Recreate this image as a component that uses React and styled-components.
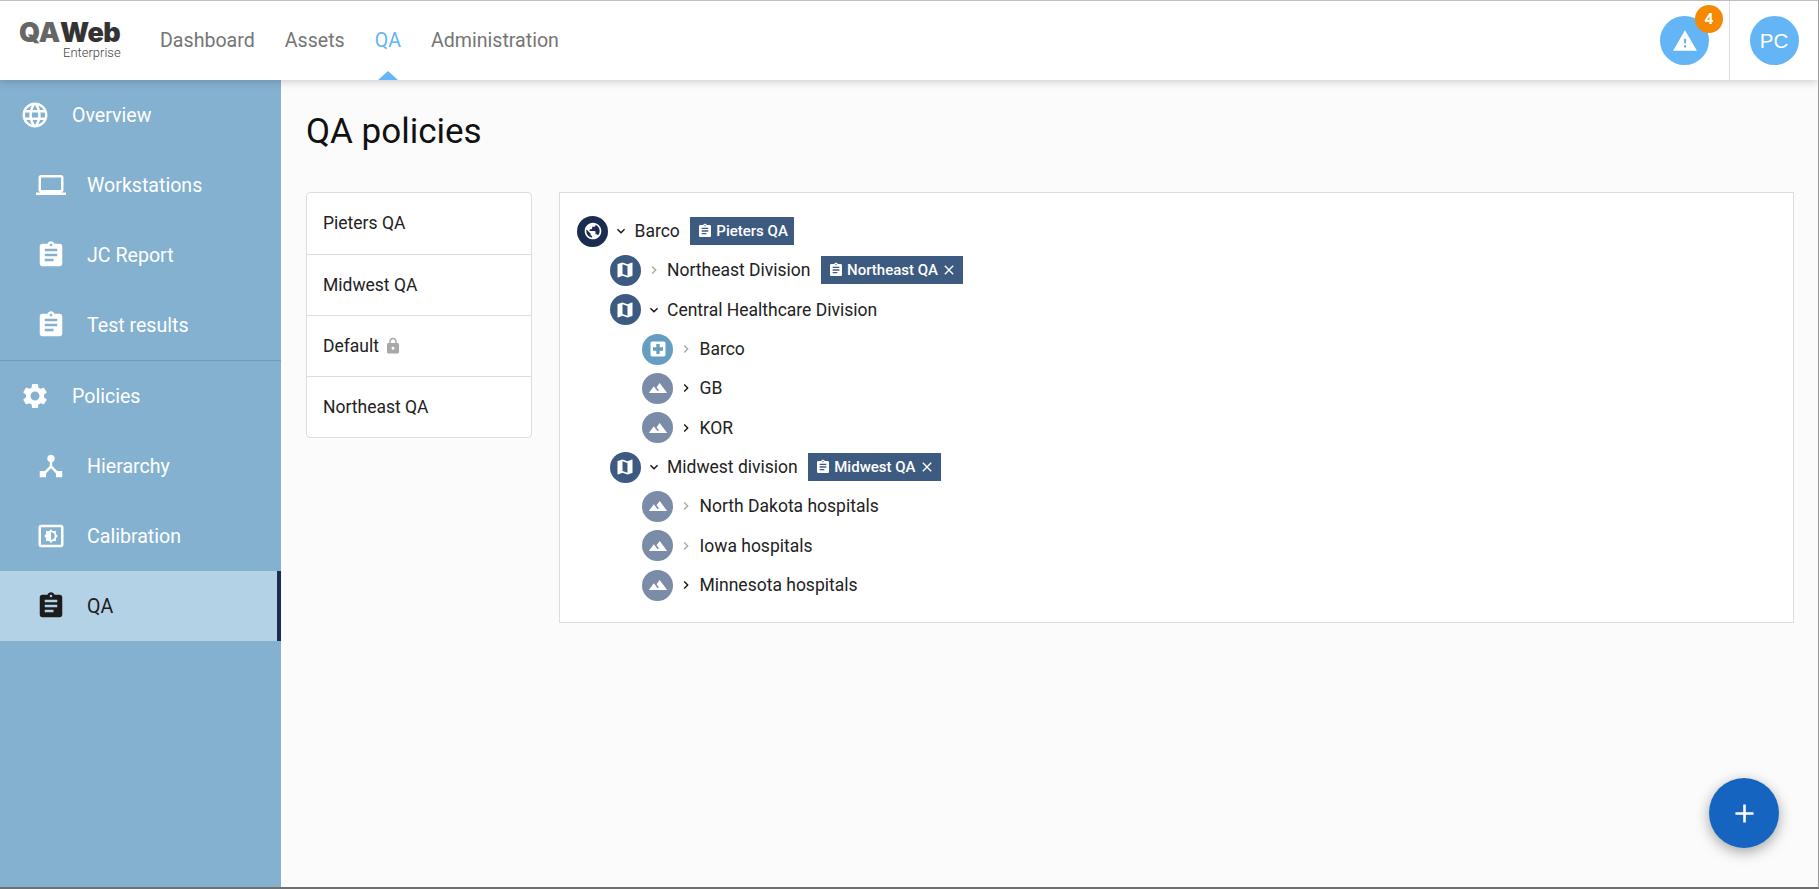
import React from 'react';
import styled, { createGlobalStyle } from 'styled-components';

const GlobalStyle = createGlobalStyle`
  html, body {
    margin: 0;
    padding: 0;
    height: 100%;
    overflow: hidden;
    background: #fbfbfb;
    font-family: 'Roboto', 'Liberation Sans', sans-serif;
  }
  * {
    box-sizing: border-box;
  }
`;

const paths = {
  public: 'M12 2C6.48 2 2 6.48 2 12s4.48 10 10 10 10-4.48 10-10S17.52 2 12 2zm-1 17.93c-3.95-.49-7-3.85-7-7.93 0-.62.08-1.21.21-1.79L9 15v1c0 1.1.9 2 2 2v1.93zm6.9-2.54c-.26-.81-1-1.39-1.9-1.39h-1v-3c0-.55-.45-1-1-1H8v-2h2c.55 0 1-.45 1-1V7h2c1.1 0 2-.9 2-2v-.41c2.93 1.19 5 4.06 5 7.41 0 2.08-.8 3.97-2.1 5.39z',
  map: 'M20.5 3l-.16.03L15 5.1 9 3 3.36 4.9c-.21.07-.36.25-.36.48V20.5c0 .28.22.5.5.5l.16-.03L9 18.9l6 2.1 5.64-1.9c.21-.07.36-.25.36-.48V3.5c0-.28-.22-.5-.5-.5zM15 19l-6-2.11V5l6 2.11V19z',
  hospital: 'M19 3H5c-1.1 0-1.99.9-1.99 2L3 19c0 1.1.9 2 2 2h14c1.1 0 2-.9 2-2V5c0-1.1-.9-2-2-2zm-1 11h-4v4h-4v-4H6v-4h4V6h4v4h4v4z',
  terrain: 'M14 6l-3.75 5 2.85 3.8-1.6 1.2C9.81 13.75 7 10 7 10l-6 8h22L14 6z',
  assignment: 'M19 3h-4.18C14.4 1.84 13.3 1 12 1c-1.3 0-2.4.84-2.82 2H5c-1.1 0-2 .9-2 2v14c0 1.1.9 2 2 2h14c1.1 0 2-.9 2-2V5c0-1.1-.9-2-2-2zm-7 0c.55 0 1 .45 1 1s-.45 1-1 1-1-.45-1-1 .45-1 1-1zm2 14H7v-2h7v2zm3-4H7v-2h10v2zm0-4H7V7h10v2z',
  language: 'M11.99 2C6.47 2 2 6.48 2 12s4.47 10 9.99 10C17.52 22 22 17.52 22 12S17.52 2 11.99 2zm6.93 6h-2.95c-.32-1.25-.78-2.45-1.38-3.56 1.84.63 3.37 1.91 4.33 3.56zM12 4.04c.83 1.2 1.48 2.53 1.91 3.96h-3.82c.43-1.43 1.08-2.76 1.91-3.96zM4.26 14C4.1 13.36 4 12.69 4 12s.1-1.36.26-2h3.38c-.08.66-.14 1.32-.14 2 0 .68.06 1.34.14 2H4.26zm.82 2h2.95c.32 1.25.78 2.45 1.38 3.56-1.84-.63-3.37-1.9-4.33-3.56zm2.95-8H5.08c.96-1.66 2.49-2.93 4.33-3.56C8.81 5.55 8.35 6.75 8.03 8zM12 19.96c-.83-1.2-1.48-2.53-1.91-3.96h3.82c-.43 1.43-1.08 2.76-1.91 3.96zM14.34 14H9.66c-.09-.66-.16-1.32-.16-2 0-.68.07-1.35.16-2h4.68c.09.65.16 1.32.16 2 0 .68-.07 1.34-.16 2zm.25 5.56c.6-1.11 1.06-2.31 1.38-3.56h2.95c-.96 1.65-2.49 2.93-4.33 3.56zM16.36 14c.08-.66.14-1.32.14-2 0-.68-.06-1.34-.14-2h3.38c.16.64.26 1.31.26 2s-.1 1.36-.26 2h-3.38z',
  laptop: 'M20 18c1.1 0 1.99-.9 1.99-2L22 6c0-1.1-.9-2-2-2H4c-1.1 0-2 .9-2 2v10c0 1.1.9 2 2 2H0v2h24v-2h-4zM4 6h16v10H4V6z',
  settings: 'M19.14 12.94c.04-.3.06-.61.06-.94 0-.32-.02-.64-.07-.94l2.03-1.58c.18-.14.23-.41.12-.61l-1.92-3.32c-.12-.22-.37-.29-.59-.22l-2.39.96c-.5-.38-1.03-.7-1.62-.94l-.36-2.54c-.04-.24-.24-.41-.48-.41h-3.84c-.24 0-.43.17-.47.41l-.36 2.54c-.59.24-1.13.57-1.62.94l-2.39-.96c-.22-.08-.47 0-.59.22L2.74 8.87c-.12.21-.08.47.12.61l2.03 1.58c-.05.3-.09.63-.09.94s.02.64.07.94l-2.03 1.58c-.18.14-.23.41-.12.61l1.92 3.32c.12.22.37.29.59.22l2.39-.96c.5.38 1.03.7 1.62.94l.36 2.54c.05.24.24.41.48.41h3.84c.24 0 .44-.17.47-.41l.36-2.54c.59-.24 1.13-.56 1.62-.94l2.39.96c.22.08.47 0 .59-.22l1.92-3.32c.12-.22.07-.47-.12-.61l-2.01-1.58zM12 15.6c-1.98 0-3.6-1.62-3.6-3.6s1.62-3.6 3.6-3.6 3.6 1.62 3.6 3.6-1.62 3.6-3.6 3.6z',
  hub: 'M17 16l-4-4V8.82C14.16 8.4 15 7.3 15 6c0-1.66-1.34-3-3-3S9 4.34 9 6c0 1.3.84 2.4 2 2.82V12l-4 4H3v5h5v-3.05l4-4.2 4 4.2V21h5v-5h-4z',
  brightness: 'M20 3H4c-1.11 0-2 .89-2 2v14c0 1.11.89 2 2 2h16c1.11 0 2-.89 2-2V5c0-1.11-.89-2-2-2zm0 16.01H4V4.99h16v14.02zM8 16h2.5l1.5 1.5 1.5-1.5H16v-2.5l1.5-1.5-1.5-1.5V8h-2.5L12 6.5 10.5 8H8v2.5L6.5 12 8 13.5V16zm4-7c1.66 0 3 1.34 3 3s-1.34 3-3 3V9z',
  warning: 'M1 21h22L12 2 1 21zm12-3h-2v-2h2v2zm0-4h-2v-4h2v4z',
  lock: 'M18 8h-1V6c0-2.76-2.24-5-5-5S7 3.24 7 6v2H6c-1.1 0-2 .9-2 2v10c0 1.1.9 2 2 2h12c1.1 0 2-.9 2-2V10c0-1.1-.9-2-2-2zm-6 9c-1.1 0-2-.9-2-2s.9-2 2-2 2 .9 2 2-.9 2-2 2zm3.1-9H8.9V6c0-1.71 1.39-3.1 3.1-3.1 1.71 0 3.1 1.39 3.1 3.1v2z',
  close: 'M19 6.41L17.59 5 12 10.59 6.41 5 5 6.41 10.59 12 5 17.59 6.41 19 12 13.41 17.59 19 19 17.59 13.41 12z',
  add: 'M19 13h-6v6h-2v-6H5v-2h6V5h2v6h6v2z',
  down: 'M7.41 8.59L12 13.17l4.59-4.58L18 10l-6 6-6-6 1.41-1.41z',
  right: 'M8.59 16.59L13.17 12 8.59 7.41 10 6l6 6-6 6-1.41-1.41z',
};

const Icon = ({ name, size = 24, color = 'currentColor' }) => (
  <svg width={size} height={size} viewBox="0 0 24 24" fill={color} style={{ flex: 'none', display: 'block' }}>
    <path d={paths[name]} />
  </svg>
);

const Page = styled.div`
  width: 1819px;
  height: 889px;
  display: flex;
  flex-direction: column;
  overflow: hidden;
  border-top: 1px solid #bdbdbd;
  border-bottom: 2px solid #6f6f6f;
  border-right: 1px solid #9a9a9a;
  background: #fbfbfb;
`;

const Header = styled.header`
  height: 79px;
  flex: none;
  display: flex;
  align-items: stretch;
  background: #fff;
  box-shadow: 0 2px 8px rgba(0, 0, 0, 0.18);
  position: relative;
  z-index: 2;
`;

const Logo = styled.div`
  width: 160px;
  flex: none;
  padding: 20px 0 0 19px;
`;

const LogoMark = styled.div`
  font-family: 'Inter', sans-serif;
  font-weight: 900;
  font-size: 27px;
  line-height: 23px;
  color: #333;
  letter-spacing: -0.5px;
  span {
    color: #666;
    letter-spacing: -0.2px;
  }
`;

const LogoSub = styled.div`
  margin: 2px 0 0 44px;
  font-size: 13px;
  line-height: 14px;
  font-weight: 300;
  color: #444;
`;

const Nav = styled.nav`
  display: flex;
  align-items: stretch;
  gap: 30px;
`;

const NavItem = styled.a`
  position: relative;
  display: flex;
  align-items: center;
  height: 79px;
  padding-bottom: 1px;
  font-size: 19.6px;
  color: ${(p) => (p.$active ? '#64b5f6' : '#757575')};

  ${(p) =>
    p.$active &&
    `
    &::after {
      content: '';
      position: absolute;
      bottom: 0;
      left: 50%;
      margin-left: -10px;
      border-left: 10px solid transparent;
      border-right: 10px solid transparent;
      border-bottom: 9px solid #64b5f6;
    }
  `}
`;

const HeaderRight = styled.div`
  margin-left: auto;
  display: flex;
  align-items: stretch;
`;

const HeaderCell = styled.div`
  display: flex;
  align-items: center;
  justify-content: center;
  width: ${(p) => p.$width}px;
  border-left: ${(p) => (p.$divided ? '1px solid #ddd' : 'none')};
`;

const RoundButton = styled.div`
  position: relative;
  width: 49px;
  height: 49px;
  border-radius: 50%;
  background: #64b5f6;
  color: #fff;
  display: flex;
  align-items: center;
  justify-content: center;
  font-family: 'Liberation Sans', sans-serif;
  font-size: 20.5px;
`;

const Badge = styled.span`
  position: absolute;
  top: -11px;
  right: -14px;
  width: 28px;
  height: 28px;
  border-radius: 50%;
  background: #f58a00;
  color: #fff;
  font-family: 'Roboto', sans-serif;
  font-size: 15.5px;
  font-weight: 700;
  display: flex;
  align-items: center;
  justify-content: center;
`;

const Body = styled.div`
  flex: 1;
  display: flex;
  min-height: 0;
`;

const Sidebar = styled.aside`
  width: 281px;
  flex: none;
  background: #85b1d0;
`;

const SideItem = styled.div`
  height: ${(p) => (p.$divided ? '71px' : '70px')};
  display: flex;
  align-items: center;
  gap: ${(p) => (p.$sub ? '21px' : '22px')};
  padding-left: ${(p) => (p.$sub ? '36px' : '20px')};
  font-size: 19.6px;
  color: ${(p) => (p.$active ? '#1c1c1c' : '#fff')};
  background: ${(p) => (p.$active ? '#b4d2e5' : 'transparent')};
  border-right: ${(p) => (p.$active ? '4px solid #1a2c50' : 'none')};
  border-bottom: ${(p) => (p.$divided ? '1px solid #6f9cbb' : 'none')};
`;

const Main = styled.main`
  flex: 1;
  padding: 0 24px 0 25px;
  position: relative;
`;

const Title = styled.h1`
  margin: 0;
  height: 112px;
  display: flex;
  align-items: center;
  font-size: 35px;
  font-weight: 400;
  color: #111;
  padding-bottom: 9px;
`;

const Columns = styled.div`
  display: flex;
  align-items: flex-start;
  gap: 27px;
`;

const PolicyList = styled.ul`
  width: 226px;
  flex: none;
  list-style: none;
  margin: 0;
  padding: 0;
  background: #fff;
  border: 1px solid #ddd;
  border-radius: 4px;
`;

const PolicyItem = styled.li`
  height: 61px;
  display: flex;
  align-items: center;
  gap: 5px;
  padding: 0 0 1px 16px;
  font-size: 17.5px;
  color: #222;
  & + & {
    border-top: 1px solid #ddd;
  }
`;

const TreeCard = styled.section`
  flex: 1;
  background: #fff;
  border: 1px solid #ddd;
  padding: 18.5px 17px 17px 17px;
`;

const TreeRow = styled.div`
  height: 39.33px;
  display: flex;
  align-items: center;
  padding-left: ${(p) => p.$level * 32.5}px;
  font-size: 17.5px;
  color: #222;
`;

const NodeIcon = styled.span`
  width: 31px;
  height: 31px;
  flex: none;
  border-radius: 50%;
  display: flex;
  align-items: center;
  justify-content: center;
  color: #fff;
  background: ${(p) => p.$bg};
`;

const Chevron = styled.span`
  width: 16px;
  flex: none;
  margin: 0 5.5px 0 5px;
  display: flex;
  justify-content: center;
  color: ${(p) => (p.$muted ? '#a8a8a8' : '#111')};
`;

const Tag = styled.span`
  height: 28px;
  margin-left: 10.5px;
  padding: 0 6px 0 7px;
  display: flex;
  align-items: center;
  gap: 3px;
  background: #3d5a80;
  color: #fff;
  font-size: 15px;
  font-weight: 500;
`;

const Fab = styled.button`
  position: absolute;
  right: 39px;
  bottom: 39px;
  width: 70px;
  height: 70px;
  border: none;
  border-radius: 50%;
  background: #1565c0;
  color: #fff;
  display: flex;
  align-items: center;
  justify-content: center;
  box-shadow: 0 4px 14px rgba(0, 0, 0, 0.35);
`;

const sideItems = [
  { icon: 'language', label: 'Overview' },
  { icon: 'laptop', label: 'Workstations', sub: true },
  { icon: 'assignment', label: 'JC Report', sub: true },
  { icon: 'assignment', label: 'Test results', sub: true, divided: true },
  { icon: 'settings', label: 'Policies' },
  { icon: 'hub', label: 'Hierarchy', sub: true },
  { icon: 'brightness', label: 'Calibration', sub: true },
  { icon: 'assignment', label: 'QA', sub: true, active: true },
];

const nodeColors = {
  public: '#1a2c50',
  map: '#3d5a80',
  hospital: '#659dc3',
  terrain: '#7a8ca8',
};

const treeRows = [
  { level: 0, icon: 'public', open: true, label: 'Barco', tag: 'Pieters QA' },
  { level: 1, icon: 'map', muted: true, label: 'Northeast Division', tag: 'Northeast QA', removable: true },
  { level: 1, icon: 'map', open: true, label: 'Central Healthcare Division' },
  { level: 2, icon: 'hospital', muted: true, label: 'Barco' },
  { level: 2, icon: 'terrain', label: 'GB' },
  { level: 2, icon: 'terrain', label: 'KOR' },
  { level: 1, icon: 'map', open: true, label: 'Midwest division', tag: 'Midwest QA', removable: true },
  { level: 2, icon: 'terrain', muted: true, label: 'North Dakota hospitals' },
  { level: 2, icon: 'terrain', muted: true, label: 'Iowa hospitals' },
  { level: 2, icon: 'terrain', label: 'Minnesota hospitals' },
];

const App = () => (
  <Page>
    <GlobalStyle />
    <Header>
      <Logo>
        <LogoMark>
          <span>QA</span>Web
        </LogoMark>
        <LogoSub>Enterprise</LogoSub>
      </Logo>
      <Nav>
        <NavItem>Dashboard</NavItem>
        <NavItem>Assets</NavItem>
        <NavItem $active>QA</NavItem>
        <NavItem>Administration</NavItem>
      </Nav>
      <HeaderRight>
        <HeaderCell $width={89}>
          <RoundButton>
            <Icon name="warning" size={26} />
            <Badge>4</Badge>
          </RoundButton>
        </HeaderCell>
        <HeaderCell $width={89} $divided>
          <RoundButton>PC</RoundButton>
        </HeaderCell>
      </HeaderRight>
    </Header>
    <Body>
      <Sidebar>
        {sideItems.map((item) => (
          <SideItem key={item.label} $sub={item.sub} $active={item.active} $divided={item.divided}>
            <Icon name={item.icon} size={30} />
            {item.label}
          </SideItem>
        ))}
      </Sidebar>
      <Main>
        <Title>QA policies</Title>
        <Columns>
          <PolicyList>
            <PolicyItem>Pieters QA</PolicyItem>
            <PolicyItem>Midwest QA</PolicyItem>
            <PolicyItem>
              Default <Icon name="lock" size={18} color="#a8a8a8" />
            </PolicyItem>
            <PolicyItem>Northeast QA</PolicyItem>
          </PolicyList>
          <TreeCard>
            {treeRows.map((row, i) => (
              <TreeRow key={i} $level={row.level}>
                <NodeIcon $bg={nodeColors[row.icon]}>
                  <Icon name={row.icon} size={20} />
                </NodeIcon>
                <Chevron $muted={row.muted}>
                  <Icon name={row.open ? 'down' : 'right'} size={16} />
                </Chevron>
                {row.label}
                {row.tag && (
                  <Tag>
                    <Icon name="assignment" size={16} />
                    {row.tag}
                    {row.removable && <Icon name="close" size={16} />}
                  </Tag>
                )}
              </TreeRow>
            ))}
          </TreeCard>
        </Columns>
        <Fab>
          <Icon name="add" size={31} />
        </Fab>
      </Main>
    </Body>
  </Page>
);

export default App;
